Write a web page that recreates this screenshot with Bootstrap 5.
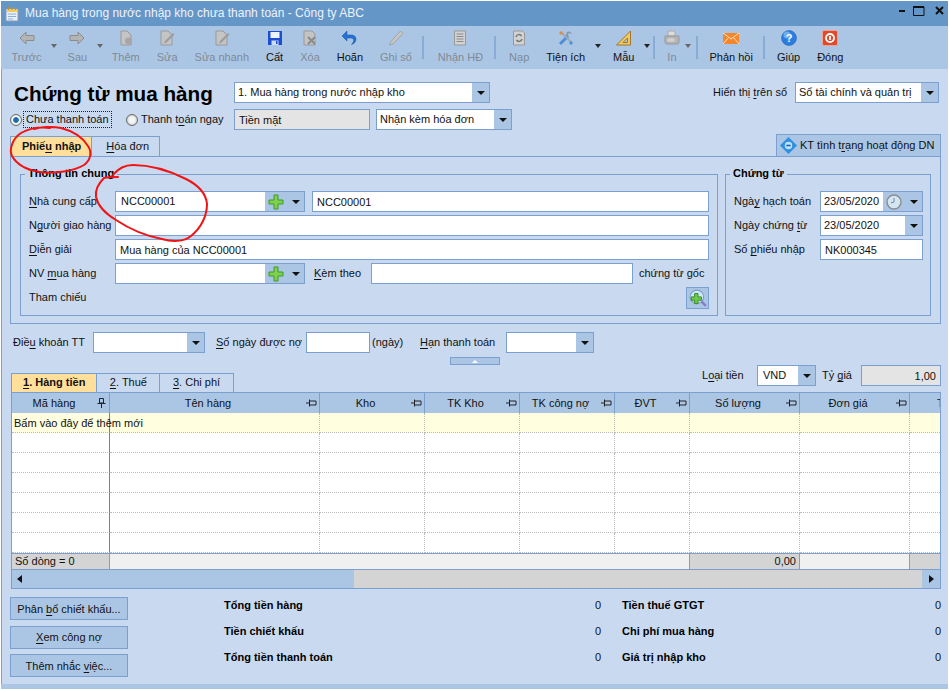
<!DOCTYPE html>
<html lang="vi">
<head>
  <meta charset="UTF-8">
  <title>Mua hàng trong nước nhập kho chưa thanh toán - Công ty ABC</title>
  <meta name="viewport" content="width=device-width, initial-scale=1">
  <link href="https://cdn.jsdelivr.net/npm/bootstrap@5.3.2/dist/css/bootstrap.min.css" rel="stylesheet">
  <style>
    html, body { background: #fff; overflow: hidden; }
    body { font: 11px/15px "Liberation Sans", Arial, sans-serif; color: #111; }
    .win { position: relative; width: 947px; height: 688px; margin: 1px 0 0 1px; background: #c9daf0; display: flex; flex-direction: column; }
    .ttl { height: 25px; background: #6496c8; color: #eef3fa; padding-left: 4px; gap: 6px; font-size: 12px; flex: none; }
    .ttl-btns { gap: 7px; margin-left: auto; padding-right: 2px; align-self: flex-start; padding-top: 3px; }
    .tb { height: 43px; background: #abc6e4; padding-left: 2px; flex: none; }
    .tb-item { padding: 4px 8.5px 0; text-align: center; white-space: nowrap; display: flex; flex-direction: column; align-items: center; font-size: 11px; }
    .tb-item svg { width: 16px; height: 16px; margin-bottom: 4px; }
    .tb-off { color: #7f8a96; }
    .tb-car { border-top: 4px solid #666; border-left: 3px solid transparent; border-right: 3px solid transparent; width: 0; height: 0; margin: 18px 2px 0 1px; }
    .tb-car.c-sau { margin-right: .5px; }
    .tb-car.on { border-top-color: #222; margin-right: 4px; }
    .tb-car.on.nar { margin-right: 1px; }
    .tb-sep { width: 2px; height: 23px; background: #88acd6; margin: 10px 5px 0 2px; }
    .tb-sep.nar { margin-right: 3px; }
    .tb-in { padding: 4px 0 0; margin-left: 4px; }
    .tb-car.car-in { margin: 18px 3px 0 5px; }
    .pg { flex: 1 1 auto; display: flex; flex-direction: column; padding: 13px 7px 0 8px; min-height: 0; border-left: 1px solid #7ba0d0; }
    .hdr1 { height: 21px; padding-right: 2px; }
    .doc-ttl { width: 216px; margin: 3px 0 0 4px; font-size: 20.7px; line-height: 26px; font-weight: 700; color: #000; white-space: nowrap; }
    .fld, .fld:focus { height: 21px; padding: 0 4px; font-size: 11px; line-height: 19px; color: #111; border: 1px solid #7ba0d0; border-radius: 0; box-shadow: none; background: #fff; min-height: 0; }
    .fld-ro, .fld-ro:focus { background: #e4e4e4; }
    .cbo { height: 21px; border: 1px solid #7ba0d0; background: #fff; display: flex; flex: none; }
    .cbo.flex-grow-1 { flex-basis: 0; min-width: 0; }
    .cbo input { flex: 1 1 auto; width: 10px; min-width: 0; border: 0; outline: 0; padding: 0 3px; font-size: 11px; background: transparent; color: #111; }
    .cbo-arr { width: 17px; flex: none; background: #abc6e4; display: flex; align-items: center; justify-content: center; }
    .cbo-arr::after { content: ""; border-top: 4px solid #111; border-left: 4px solid transparent; border-right: 4px solid transparent; }
    .cbo-ico { width: 22px; flex: none; background: #abc6e4; display: flex; align-items: center; justify-content: center; }
    .cbo-ico svg { width: 16px; height: 16px; }
    .w-vt { width: 256px; }
    .w-so { width: 144px; }
    .w-ro { width: 136px; flex: none; }
    .w-nk { width: 136px; margin-left: 6px; }
    .hdr2 { height: 21px; margin-top: 6px; }
    .rad { width: 12px; height: 12px; border-radius: 50%; border: 1px solid #6a6a6a; background: radial-gradient(circle, #f5f5f5 40%, #aaa 100%); flex: none; }
    .rad.on { background: radial-gradient(circle, #1b6fb0 35%, #fff 45%, #ccc 100%); }
    .rad-lbl { white-space: nowrap; margin-left: 3px; }
    .rad-foc { outline: 1px dotted #222; width: 87px; margin: 0 15px 0 2px; padding-left: 2px; }
    .rad-wrap { width: 220px; flex: none; }
    .tabs { height: 22px; margin-top: 4px; align-items: flex-end; flex: none; }
    .tab-x { height: 20px; padding: 0 10px 0 14px; border: 1px solid #7ba0d0; border-bottom: 0; border-left: 0; line-height: 18px; white-space: nowrap; color: #111; }
    .tab-x.on { background: #ffdf9a; font-weight: 700; border-left: 1px solid #7ba0d0; padding: 0 10px 0 11px; }
    .kt-btn { height: 22px; width: 165px; margin-left: auto; background: #abc6e4; border: 1px solid #7ba0d0; border-bottom: 0; padding: 0 0 0 3px; gap: 3px; white-space: nowrap; font-size: 11px; color: #111; border-radius: 0; }
    .kt-btn svg { width: 17px; height: 17px; }
    .pnl { height: 168px; border: 1px solid #7ba0d0; padding: 17px 9px 0 9px; gap: 7px; flex: none; }
    .grp { border: 1px solid #7ba0d0; height: 142px; padding: 0 8px; flex: none; }
    .grp-a { width: 698px; }
    .grp-b { width: 206px; padding-right: 7px; }
    .grp-t { display: inline-block; background: #c9daf0; font-weight: 700; padding: 0 3px; margin: -9px 0 0 -4px; height: 15px; vertical-align: top; color: #000; }
    .fr { height: 21px; margin-bottom: 3px; white-space: nowrap; }
    .fr-1 { margin-top: 1px; }
    .lb-a { width: 86px; flex: none; }
    .lb-b { width: 86px; flex: none; }
    .lkp { width: 190px; }
    .lkp input { padding-left: 5px; }
    .fr input.fld { padding-left: 4px; }
    .g-gap { margin-left: 7px; }
    .kem-l { width: 57px; margin-left: 9px; flex: none; }
    .kem-i { width: 262px; flex: none; }
    .kem-r { margin-left: 6px; }
    .ref-btn { width: 23px; height: 22px; margin: 0 0 0 auto; background: #abc6e4; border: 1px solid #7ba0d0; display: flex; align-items: center; justify-content: center; padding: 0; border-radius: 0; }
    .ref-btn svg { width: 18px; height: 18px; }
    .terms { height: 21px; margin-top: 8px; flex: none; white-space: nowrap; }
    .t1 { width: 80px; margin-left: 3px; flex: none; }
    .t2 { width: 90px; margin-left: 11px; flex: none; }
    .t3 { width: 48px; margin-left: 2px; flex: none; }
    .t4 { width: 86px; flex: none; }
    #cTerm { width: 112px; }
    #iDays { width: 64px; flex: none; }
    #cDue { width: 88px; }
    #cCur { width: 59px; }
    #cCur input { padding-left: 5px; }
    #iRate { width: 80px; flex: none; }
    .collapse-h { width: 50px; height: 8px; margin: 4px 0 0 440px; background: #abc6e4; border: 1px solid #7ba0d0; display: flex; align-items: center; justify-content: center; flex: none; }
    .collapse-h::after { content: ""; border-bottom: 3px solid #fff; border-left: 3px solid transparent; border-right: 3px solid transparent; }
    .mid { height: 27px; flex: none; }
    .tabs2 { margin: auto 0 0 1px; }
    .tabs2 .tab-x { height: 19px; line-height: 17px; padding: 0 12.5px; }
    .tabs2 .tab-x.on { padding: 0 11px; }
    .cur { margin-left: auto; height: 21px; white-space: nowrap; }
    .cur-a { width: 55px; flex: none; }
    .cur-b { width: 39px; margin-left: 6px; flex: none; }
    .grid-w { border: 1px solid #7ba0d0; width: 930px; margin-left: 1px; background: #fff; overflow: hidden; flex: none; }
    .grid-t { width: 1018px; table-layout: fixed; margin: 0; border-collapse: separate; border-spacing: 0; }
    .grid-t th { background: #abc6e4; height: 20px; padding: 0 1px 0 0; font-weight: 400; border-right: 1px solid #7ba0d0; border-bottom: 0; color: #111; box-shadow: none; vertical-align: middle; }
    .grid-t td { height: 20px; padding: 0 2px; border-right: 1px dotted #bbb; border-bottom: 1px dotted #bbb; background: #fff; white-space: nowrap; overflow: visible; box-shadow: none; color: #111; vertical-align: middle; }
    .grid-t tr.add td { background: #ffffe0; padding-top: 1px; }
    .grid-t td.frz { border-right: 1px solid #808080; }
    .grid-t tr.ft td { height: 17px; background: #f0f0f0; border-top: 1px solid #7ba0d0; border-right: 0; border-bottom: 1px solid #7ba0d0; padding: 0 3px; }
    .grid-t tr.ft td.sum { background: #d4d4d4; }
    .grid-t tr.ft td.edge { border-right: 1px solid #7ba0d0; }
    .pin { width: 11px; height: 10px; flex: none; margin-right: 1px; }
    .sb { height: 18px; background: #d4d4d4; }
    .sb-th { width: 342px; background: #abc6e4; padding-left: 5px; }
    .sb-r { width: 18px; margin-left: auto; background: #abc6e4; justify-content: center; }
    .sb-l { border-right: 5px solid #111; border-top: 4px solid transparent; border-bottom: 4px solid transparent; }
    .sb-rr { border-left: 5px solid #111; border-top: 4px solid transparent; border-bottom: 4px solid transparent; }
    .foot { margin-top: 8px; flex: none; }
    .foot-btns { width: 118px; flex: none; gap: 5.5px; }
    .foot-btn { height: 23px; padding: 0; background: #abc6e4; border: 1px solid #7ba0d0; border-radius: 0; font-size: 11px; line-height: 20px; color: #111; }
    .tots { margin-left: 96px; padding-top: 1px; width: 717px; flex: none; }
    .tot-c { width: 377px; flex: none; }
    .tot-d { width: 319px; margin-left: 21px; flex: none; }
    .tot-r { height: 26px; }
    .tot-r b { color: #000; }
    .strip { height: 5px; background: #abc6e4; flex: none; }
    .ink { position: absolute; left: -1px; top: -1px; width: 949px; height: 690px; pointer-events: none; }
    u { text-underline-offset: 2px; }
  </style>
</head>
<body>

<svg width="0" height="0" class="d-none">
  <defs>
    <symbol id="i-back" viewBox="0 0 16 16"><path d="M1 8 7 2v3.5h8v5H7V14z" fill="#b4b4b4" stroke="#8c8c8c"/></symbol>
    <symbol id="i-next" viewBox="0 0 16 16"><path d="M15 8 9 2v3.500H1v5h8V14z" fill="#b4b4b4" stroke="#8c8c8c"/></symbol>
    <symbol id="i-add" viewBox="0 0 16 16"><path d="M3 1h6l4 4v10H3z" fill="#c4c4c4" stroke="#999"/><circle cx="10.500" cy="11" r="3.500" fill="#a6a6a6"/></symbol>
    <symbol id="i-edit" viewBox="0 0 16 16"><path d="M2 1h7l4 4v10H2z" fill="#c4c4c4" stroke="#999"/><path d="m6 11 8-8 1.500 1.500-8 8-2.500 1z" fill="#9c9c9c"/></symbol>
    <symbol id="i-save" viewBox="0 0 16 16"><path d="M1 1h14v14H1z" fill="#1c4fd0"/><path d="M3.500 2h9v6h-9z" fill="#eef4ff"/><path d="M4.500 10.500h7V15h-7z" fill="#cfdcf5"/><path d="M9 11h1.500v3H9z" fill="#1c4fd0"/></symbol>
    <symbol id="i-del" viewBox="0 0 16 16"><path d="M2 1h8l3 3v11H2z" fill="#c4c4c4" stroke="#999"/><path d="m6 7 7 7m0-7-7 7" stroke="#8a8a8a" stroke-width="2"/></symbol>
    <symbol id="i-undo" viewBox="0 0 16 16"><path d="M5 5h4.500c6 0 6 8 0 9.500C13 11 12 8 9 8H5v3L0 6l5-5z" fill="#2472d6" stroke="#17509c" stroke-width=".5"/></symbol>
    <symbol id="i-post" viewBox="0 0 16 16"><path d="M12.500 1 15 3.500 5 14l-3.500 1L3 11.500z" fill="#c8c8c8" stroke="#a2a2a2"/></symbol>
    <symbol id="i-inv" viewBox="0 0 16 16"><path d="M2.500 1h11v14h-11z" fill="#d2d2d2" stroke="#999"/><path d="M4.500 4h7m-7 2.500h7M4.500 9h7m-7 2.500h7" stroke="#8c8c8c"/></symbol>
    <symbol id="i-load" viewBox="0 0 16 16"><path d="M2.500 1h9l2 2v12h-11z" fill="#d2d2d2" stroke="#999"/><path d="M5 7a3 3 0 0 1 5.500-1M11 9a3 3 0 0 1-5.500 1" fill="none" stroke="#777" stroke-width="1.500"/></symbol>
    <symbol id="i-tool" viewBox="0 0 16 16"><path d="m2 14 8-8" stroke="#4c8fd8" stroke-width="3"/><path d="M9 2c2-1.500 5 0 4.500 2.500L12 3l-2 1 .5 2.500C8 7 7.500 4 9 2z" fill="#8a98a8"/><path d="m3 2 11 11" stroke="#9ca8b4" stroke-width="2"/><path d="m1 3 2-2 2 2-2 2z" fill="#e08a3c"/><path d="m11 13 2-2 2 2-2 2z" fill="#4c8fd8"/></symbol>
    <symbol id="i-tpl" viewBox="0 0 16 16"><path d="M14.500 1v14H.5z" fill="#f2c95c" stroke="#a4752a"/><path d="M11.500 8v4.500H7z" fill="#abc6e4" stroke="#a4752a"/></symbol>
    <symbol id="i-prn" viewBox="0 0 16 16"><path d="M4 1h7v5H4z" fill="#ddd" stroke="#aaa"/><path d="M1 6h14v6a2 2 0 0 1-2 2H3a2 2 0 0 1-2-2z" fill="#b4b4b4" stroke="#999"/><ellipse cx="7" cy="10" rx="4" ry="2" fill="#cecece"/></symbol>
    <symbol id="i-mail" viewBox="0 0 16 16"><path d="M0 3h16v11H0z" fill="#f5862a"/><path d="m0 3 8 6 8-6M0 14l5.500-6.500M16 14l-5.500-6.500" fill="none" stroke="#fde3c4"/></symbol>
    <symbol id="i-help" viewBox="0 0 16 16"><circle cx="8" cy="8" r="7.500" fill="#2a7ee0" stroke="#1a5cb0" stroke-width=".5"/><circle cx="6" cy="5" r="3.500" fill="#8ec0f6" opacity=".7"/><text x="8" y="12" text-anchor="middle" font-family="Liberation Sans" font-size="11" font-weight="700" fill="#fff">?</text></symbol>
    <symbol id="i-close" viewBox="0 0 16 16"><rect x=".5" y=".5" width="15" height="15" rx="1.500" fill="#e04a2c" stroke="#f0a090"/><circle cx="8" cy="8" r="4" fill="none" stroke="#fff" stroke-width="1.800"/><path d="M8 6v4" stroke="#fff" stroke-width="1.800"/></symbol>
    <symbol id="i-plus" viewBox="0 0 16 16"><path d="M6 1h4v5h5v4h-5v5H6v-5H1V6h5z" fill="#7ed04e" stroke="#3c9a26"/></symbol>
    <symbol id="i-pin" viewBox="0 0 11 10"><path d="M0 5h3M3.500 1.500v7M3.500 3h6.500v4H3.500z" fill="none" stroke="#222"/></symbol>
    <symbol id="i-pinv" viewBox="0 0 11 10"><path d="M3.500.5h4V5h-4zM1.500 5.500h8M5.500 5.500V10" fill="none" stroke="#222"/></symbol>
  </defs>
</svg>

<div class="win">
  <!-- title bar -->
  <div class="ttl d-flex align-items-center">
    <svg width="14" height="16" viewBox="0 0 14 16"><path d="M1 3h12v12H1z" fill="#e8f0fa" stroke="#8a9ab8"/><path d="M2 3h10v3H2z" fill="#f2c95c"/><path d="M3 8h8M3 10.500h8M3 13h5" stroke="#8ab0e0"/><path d="M3.500 1v3M7 1v3M10.500 1v3" stroke="#c89020"/></svg>
    <span>Mua hàng trong nước nhập kho chưa thanh toán - Công ty ABC</span>
    <div class="ttl-btns d-flex">
      <svg width="10" height="12" viewBox="0 0 10 12"><path d="M3 7h6" stroke="#111" stroke-width="2"/></svg>
      <svg width="12" height="12" viewBox="0 0 12 12"><path d="M.5 3h10.500v8.500H.5z" fill="none" stroke="#111"/><path d="M0 3h11" stroke="#111" stroke-width="2"/></svg>
      <svg width="14" height="12" viewBox="0 0 14 12"><path d="m4 3 7 7m0-7-7 7" stroke="#111" stroke-width="2"/></svg>
    </div>
  </div>

  <!-- toolbar -->
  <div class="tb d-flex">
    <div class="tb-item tb-off"><svg><use href="#i-back"/></svg>Trước</div><div class="tb-car"></div>
    <div class="tb-item tb-off"><svg><use href="#i-next"/></svg>Sau</div><div class="tb-car c-sau"></div>
    <div class="tb-item tb-off"><svg><use href="#i-add"/></svg>Thêm</div>
    <div class="tb-item tb-off"><svg><use href="#i-edit"/></svg>Sửa</div>
    <div class="tb-item tb-off"><svg><use href="#i-edit"/></svg>Sửa nhanh</div>
    <div class="tb-item"><svg><use href="#i-save"/></svg>Cất</div>
    <div class="tb-item tb-off"><svg><use href="#i-del"/></svg>Xóa</div>
    <div class="tb-item"><svg><use href="#i-undo"/></svg>Hoãn</div>
    <div class="tb-item tb-off"><svg><use href="#i-post"/></svg>Ghi sổ</div>
    <div class="tb-sep"></div>
    <div class="tb-item tb-off"><svg><use href="#i-inv"/></svg>Nhận HĐ</div>
    <div class="tb-sep"></div>
    <div class="tb-item tb-off"><svg><use href="#i-load"/></svg>Nạp</div>
    <div class="tb-item"><svg><use href="#i-tool"/></svg>Tiện ích</div><div class="tb-car on"></div>
    <div class="tb-item"><svg><use href="#i-tpl"/></svg>Mẫu</div><div class="tb-car on nar"></div>
    <div class="tb-sep"></div>
    <div class="tb-item tb-off tb-in"><svg><use href="#i-prn"/></svg>In</div><div class="tb-car car-in"></div>
    <div class="tb-sep nar"></div>
    <div class="tb-item"><svg><use href="#i-mail"/></svg>Phản hồi</div>
    <div class="tb-sep nar"></div>
    <div class="tb-item"><svg><use href="#i-help"/></svg>Giúp</div>
    <div class="tb-item"><svg><use href="#i-close"/></svg>Đóng</div>
  </div>

  <div class="pg">
    <div class="hdr1 d-flex align-items-center">
      <div class="doc-ttl">Chứng từ mua hàng</div>
      <div class="cbo w-vt ms-1"><input value="1. Mua hàng trong nước nhập kho" readonly><span class="cbo-arr"></span></div>
      <span class="ms-auto me-2">Hiển thị <u>t</u>rên sổ</span>
      <div class="cbo w-so"><input value="Sổ tài chính và quản trị" readonly><span class="cbo-arr"></span></div>
    </div>
    <div class="hdr2 d-flex align-items-center">
      <div class="rad-wrap d-flex align-items-center">
        <span class="rad on"></span><span class="rad-lbl rad-foc">Chưa thanh toán</span>
        <span class="rad"></span><span class="rad-lbl">Thanh t<u>o</u>án ngay</span>
      </div>
      <input class="form-control fld fld-ro w-ro ms-1" value="Tiền mặt" readonly>
      <div class="cbo w-nk"><input value="Nhận kèm hóa đơn" readonly><span class="cbo-arr"></span></div>
    </div>

    <div class="tabs d-flex">
      <div class="tab-x on">Phiế<u>u</u> nhập</div>
      <div class="tab-x"><u>H</u>óa đơn</div>
      <button class="btn kt-btn d-flex align-items-center" type="button">
        <svg viewBox="0 0 16 16"><path d="M8 0 16 8l-8 8-8-8z" fill="#2f8fe0"/><circle cx="8" cy="8" r="3.500" fill="#bfe2fa"/><path d="M6 8h4" stroke="#1a62b0" stroke-width="1.500"/></svg>
        <span>KT tình t<u>r</u>ạng hoạt động DN</span>
      </button>
    </div>

    <div class="pnl d-flex">
      <div class="grp grp-a">
        <div class="grp-t">Thông tin chung</div>
        <div class="fr fr-1 d-flex align-items-center">
          <span class="lb-a"><u>N</u>hà cung cấp</span>
          <div class="cbo lkp"><input value="NCC00001" readonly><span class="cbo-ico"><svg><use href="#i-plus"/></svg></span><span class="cbo-arr"></span></div>
          <input class="form-control fld g-gap" value="NCC00001" readonly>
        </div>
        <div class="fr d-flex align-items-center">
          <span class="lb-a">N<u>g</u>ười giao hàng</span>
          <input class="form-control fld" readonly>
        </div>
        <div class="fr d-flex align-items-center">
          <span class="lb-a"><u>D</u>iễn giải</span>
          <input class="form-control fld" value="Mua hàng của NCC00001" readonly>
        </div>
        <div class="fr d-flex align-items-center">
          <span class="lb-a">NV <u>m</u>ua hàng</span>
          <div class="cbo lkp"><input readonly><span class="cbo-ico"><svg><use href="#i-plus"/></svg></span><span class="cbo-arr"></span></div>
          <span class="kem-l"><u>K</u>èm theo</span>
          <input class="form-control fld kem-i" readonly>
          <span class="kem-r">chứng từ gốc</span>
        </div>
        <div class="fr d-flex align-items-center">
          <span>Tham chiếu</span>
          <button class="btn ref-btn" type="button"><svg viewBox="0 0 16 16"><circle cx="7" cy="7" r="6" fill="#cfe6f8" stroke="#7aa0c8"/><path d="m11 11 4 4" stroke="#8878c8" stroke-width="2"/><path d="M5 4h3v3h3v3H8v3H5v-3H2V7h3z" fill="#6fc84a" stroke="#2f8a20" stroke-width=".8"/></svg></button>
        </div>
      </div>
      <div class="grp grp-b">
        <div class="grp-t">Chứng từ</div>
        <div class="fr fr-1 d-flex align-items-center">
          <span class="lb-b">Ngà<u>y</u> hạch toán</span>
          <div class="cbo flex-grow-1"><input value="23/05/2020" readonly><span class="cbo-ico"><svg viewBox="0 0 16 16"><circle cx="8" cy="8" r="7" fill="#d4e6f2" stroke="#8c8c8c" stroke-width="1.400"/><path d="M8 4v4l-3 1" stroke="#6a8aa8" fill="none"/></svg></span><span class="cbo-arr"></span></div>
        </div>
        <div class="fr d-flex align-items-center">
          <span class="lb-b">Ngày chứng <u>t</u>ừ</span>
          <div class="cbo flex-grow-1"><input value="23/05/2020" readonly><span class="cbo-arr"></span></div>
        </div>
        <div class="fr d-flex align-items-center">
          <span class="lb-b">Số <u>p</u>hiếu nhập</span>
          <input class="form-control fld" value="NK000345" readonly>
        </div>
      </div>
    </div>

    <div class="terms d-flex align-items-center">
      <span class="t1">Điề<u>u</u> khoản TT</span>
      <div class="cbo" id="cTerm"><input readonly><span class="cbo-arr"></span></div>
      <span class="t2"><u>S</u>ố ngày được nợ</span>
      <input class="form-control fld" id="iDays" readonly>
      <span class="t3">(ngày)</span>
      <span class="t4"><u>H</u>ạn thanh toán</span>
      <div class="cbo" id="cDue"><input readonly><span class="cbo-arr"></span></div>
    </div>
    <div class="collapse-h"></div>

    <div class="mid d-flex">
      <div class="tabs2 d-flex">
        <div class="tab-x on"><u>1</u>. Hàng tiền</div>
        <div class="tab-x"><u>2</u>. Thuế</div>
        <div class="tab-x"><u>3</u>. Chi phí</div>
      </div>
      <div class="cur d-flex align-items-center">
        <span class="cur-a">L<u>o</u>ại tiền</span>
        <div class="cbo" id="cCur"><input value="VND" readonly><span class="cbo-arr"></span></div>
        <span class="cur-b">Tỷ <u>g</u>iá</span>
        <input class="form-control fld fld-ro text-end" id="iRate" value="1,00" readonly>
      </div>
    </div>

    <div class="grid-w">
      <table class="table grid-t">
        <colgroup id="gridCols"></colgroup>
        <thead><tr id="gridHead"></tr></thead>
        <tbody id="gridBody"></tbody>
      </table>
      <div class="sb d-flex">
        <div class="sb-th d-flex align-items-center"><span class="sb-l"></span></div>
        <div class="sb-r d-flex align-items-center"><span class="sb-rr"></span></div>
      </div>
    </div>

    <div class="foot d-flex">
      <div class="foot-btns d-flex flex-column">
        <button class="btn foot-btn" type="button">Phân <u>b</u>ổ chiết khấu...</button>
        <button class="btn foot-btn" type="button"><u>X</u>em công nợ</button>
        <button class="btn foot-btn" type="button">Thêm nhắc <u>v</u>iệc...</button>
      </div>
      <div class="tots d-flex">
        <div class="tot-c">
          <div class="tot-r d-flex justify-content-between"><b>Tổng tiền hàng</b><span>0</span></div>
          <div class="tot-r d-flex justify-content-between"><b>Tiền chiết khấu</b><span>0</span></div>
          <div class="tot-r d-flex justify-content-between"><b>Tổng tiền thanh toán</b><span>0</span></div>
        </div>
        <div class="tot-d">
          <div class="tot-r d-flex justify-content-between"><b>Tiền thuế GTGT</b><span>0</span></div>
          <div class="tot-r d-flex justify-content-between"><b>Chi phí mua hàng</b><span>0</span></div>
          <div class="tot-r d-flex justify-content-between"><b>Giá trị nhập kho</b><span>0</span></div>
        </div>
      </div>
    </div>
  </div>
  <div class="strip"></div>

  <!-- red marker annotations -->
  <svg class="ink" viewBox="0 0 949 690" fill="none" stroke="#f01414" stroke-width="2" stroke-linecap="round">
    <path d="M50 128C42 127 30 128 21 133 12 139 9 150 12 156 17 165 27 170 40 172 55 174 74 171 84 165 91 160 92 152 88 146 83 138 73 131 61 128 52 126 40 127 34 129"/>
    <path d="M118 177C112 177 108 177 104 178 99 183 95 190 96 197 98 206 106 214 116 220 128 228 146 236 162 239 172 242 184 242 191 236 201 228 207 216 207 204 206 193 198 185 186 179 170 171 150 165 133 165 124 165 117 170 113 175"/>
  </svg>
</div>

<script>
// grid columns, widths are from the reference picture
const cols = [
  { t: "Mã hàng", w: 98, pin: "i-pinv" },
  { t: "Tên hàng", w: 210 },
  { t: "Kho", w: 105 },
  { t: "TK Kho", w: 95 },
  { t: "TK công nợ", w: 95 },
  { t: "ĐVT", w: 75 },
  { t: "Số lượng", w: 110 },
  { t: "Đơn giá", w: 110 },
  { t: "Thành tiền", w: 120 }
];

function renderGrid() {
  const colgroup = document.getElementById("gridCols");
  const head = document.getElementById("gridHead");
  const body = document.getElementById("gridBody");

  cols.forEach(c => {
    const col = document.createElement("col");
    col.style.width = c.w + "px";
    colgroup.appendChild(col);
    const th = document.createElement("th");
    th.innerHTML = `<div class="d-flex align-items-center"><span class="flex-grow-1 text-center">${c.t}</span><svg class="pin"><use href="#${c.pin || "i-pin"}"/></svg></div>`;
    head.appendChild(th);
  });

  for (let r = 0; r < 7; r++) {
    const row = document.createElement("tr");
    if (r === 0) row.className = "add";
    cols.forEach((c, i) => {
      const td = document.createElement("td");
      if (i === 0) {
        td.className = "frz";
        if (r === 0) td.textContent = "Bấm vào đây để thêm mới";
      }
      row.appendChild(td);
    });
    body.appendChild(row);
  }

  const foot = document.createElement("tr");
  foot.className = "ft";
  cols.forEach((c, i) => {
    const td = document.createElement("td");
    if (i === 0) { td.className = "sum edge"; td.textContent = "Số dòng = 0"; }
    if (i === 5) td.className = "edge";
    if (i === 6) { td.className = "sum edge text-end"; td.textContent = "0,00"; }
    if (i === 7) td.className = "edge";
    if (i === 8) td.className = "sum";
    foot.appendChild(td);
  });
  body.appendChild(foot);
}

renderGrid();
</script>
<script src="https://cdn.jsdelivr.net/npm/bootstrap@5.3.2/dist/js/bootstrap.bundle.min.js"></script>
</body>
</html>
